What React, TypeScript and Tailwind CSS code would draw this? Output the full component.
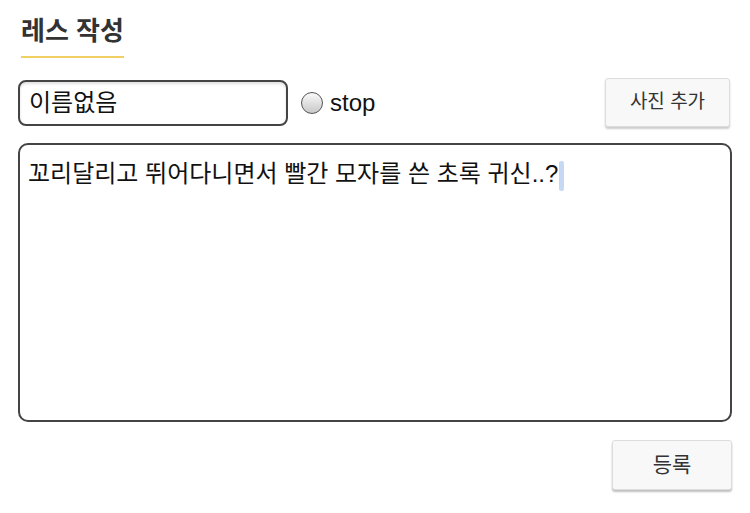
import React from 'react';

const font = { fontFamily: '"Liberation Sans", "Noto Sans CJK KR", sans-serif' };

export default function App() {
  return (
    <div className="min-h-screen bg-white px-[18px] pt-[15px] text-[#222]" style={font}>
      {/* Header */}
      <div className="inline-block ml-[3px] border-b-2 border-[#f0d060] pb-[8px]">
        <h2 className="text-[26px] leading-[33px] font-bold text-[#333]">레스 작성</h2>
      </div>

      {/* Name + options row */}
      <div className="mt-[20px] flex items-center justify-between">
        <div className="flex items-center">
          <div className="w-[270px] h-[46px] rounded-[8px] border-2 border-[#444] shadow-[inset_0_2px_3px_rgba(0,0,0,0.12)] flex items-center px-[9px]">
            <span className="text-[24px] text-[#111]">이름없음</span>
          </div>
          <label className="ml-[13px] flex items-center">
            <span className="w-[22px] h-[22px] rounded-full border-[1.5px] border-[#555] bg-gradient-to-b from-[#fafafa] to-[#c8c8c8]" />
            <span className="ml-[7px] text-[24px] text-[#111]">stop</span>
          </label>
        </div>
        <button className="mr-[2px] w-[125px] h-[49px] rounded-[3px] border border-[#ddd] bg-[#f8f8f8] shadow-[0_2px_2px_rgba(0,0,0,0.2)] text-[19px] text-[#333]">
          사진 추가
        </button>
      </div>

      {/* Body */}
      <div className="mt-[16px] h-[279px] rounded-[10px] border-2 border-[#444] px-[8px] pt-[12px]">
        <p className="text-[24px] leading-[34px] text-[#111]">
          꼬리달리고 뛰어다니면서 빨간 모자를 쓴 초록 귀신..?
          <span className="inline-block align-middle ml-[1px] w-[5px] h-[30px] rounded-[2px] bg-[#c6d8f4]" />
        </p>
      </div>

      <div className="mt-[18px] flex justify-end">
        <button className="w-[120px] h-[50px] rounded-[3px] border border-[#ddd] bg-[#f8f8f8] shadow-[0_2px_2px_rgba(0,0,0,0.25)] text-[21px] text-[#333]">
          등록
        </button>
      </div>
    </div>
  );
}
